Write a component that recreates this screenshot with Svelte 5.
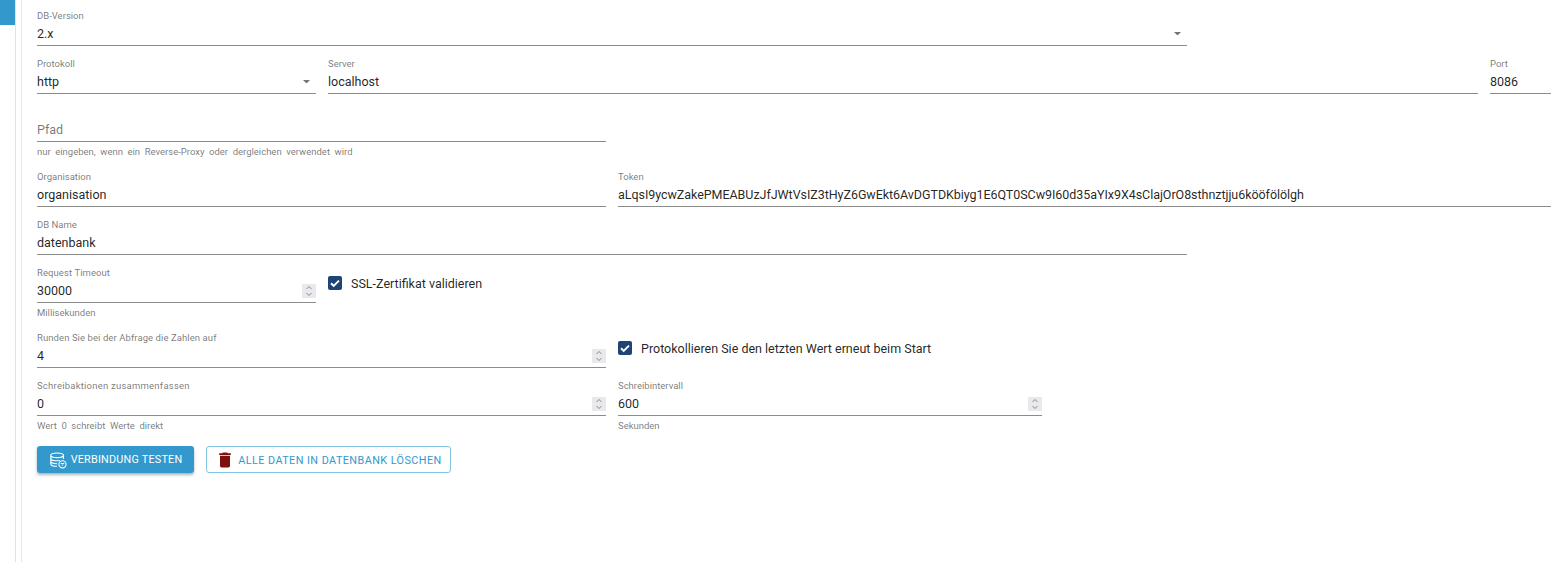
<script>
  const caret = "M0 0h7L3.500 3.500z";
</script>

{#snippet spin()}
  <svg class="spin" viewBox="0 0 14 14" aria-hidden="true"><path d="M4.500 5L7 2.500 9.500 5M4.500 9L7 11.500 9.500 9" /></svg>
{/snippet}

<div class="page">
  <aside class="rail"><div class="tab"></div></aside>
  <main class="form">
    <div class="row">
      <div class="field w4">
        <span class="label">DB-Version</span>
        <div class="control"><span class="value">2.x</span><svg class="arrow" viewBox="0 0 7 3.500"><path d={caret} /></svg></div>
      </div>
    </div>
    <div class="row">
      <div class="field w1">
        <span class="label">Protokoll</span>
        <div class="control"><span class="value">http</span><svg class="arrow" viewBox="0 0 7 3.500"><path d={caret} /></svg></div>
      </div>
      <div class="field grow">
        <span class="label">Server</span>
        <div class="control"><input value="localhost" /></div>
      </div>
      <div class="field port">
        <span class="label">Port</span>
        <div class="control"><input value="8086" /></div>
      </div>
    </div>
    <div class="row">
      <div class="field w2">
        <span class="label"></span>
        <div class="control"><input placeholder="Pfad" /></div>
        <p class="help">nur eingeben, wenn ein Reverse-Proxy oder dergleichen verwendet wird</p>
      </div>
    </div>
    <div class="row">
      <div class="field w2">
        <span class="label">Organisation</span>
        <div class="control"><input value="organisation" /></div>
      </div>
      <div class="field grow">
        <span class="label">Token</span>
        <div class="control"><input class="token" value="aLqsI9ycwZakePMEABUzJfJWtVsIZ3tHyZ6GwEkt6AvDGTDKbiyg1E6QT0SCw9I60d35aYIx9X4sClajOrO8sthnztjju6kööfölölgh" /></div>
      </div>
    </div>
    <div class="row">
      <div class="field w4">
        <span class="label">DB Name</span>
        <div class="control"><input value="datenbank" /></div>
      </div>
    </div>
    <div class="row">
      <div class="field w1">
        <span class="label slight">Request Timeout</span>
        <div class="control"><input type="number" value="30000" />{@render spin()}</div>
        <p class="help">Millisekunden</p>
      </div>
      <label class="check">
        <svg viewBox="0 0 14 14"><rect width="14" height="14" rx="2" /><path d="M3 7.200l2.700 2.700L11 4.600" /></svg>
        <span>SSL-Zertifikat validieren</span>
      </label>
    </div>
    <div class="row">
      <div class="field w2">
        <span class="label slight">Runden Sie bei der Abfrage die Zahlen auf</span>
        <div class="control"><input type="number" value="4" />{@render spin()}</div>
      </div>
      <label class="check">
        <svg viewBox="0 0 14 14"><rect width="14" height="14" rx="2" /><path d="M3 7.200l2.700 2.700L11 4.600" /></svg>
        <span>Protokollieren Sie den letzten Wert erneut beim Start</span>
      </label>
    </div>
    <div class="row">
      <div class="field w2">
        <span class="label wide">Schreibaktionen zusammenfassen</span>
        <div class="control"><input type="number" value="0" />{@render spin()}</div>
        <p class="help">Wert 0 schreibt Werte direkt</p>
      </div>
      <div class="field interval">
        <span class="label">Schreibintervall</span>
        <div class="control"><input type="number" value="600" />{@render spin()}</div>
        <p class="help">Sekunden</p>
      </div>
    </div>
    <div class="actions">
      <button class="btn primary">
        <svg viewBox="0 0 20 20" class="db"><path d="M9 2.200c-4 0-7 1-7 2.600v9.600c0 1.600 3 2.600 7 2.600M9 2.200c4 0 7 1 7 2.600s-3 2.600-7 2.600-7-1-7-2.600M2 8.200c0 1.600 3 2.600 7 2.600 1.200 0 2.300-.1 3.200-.3M2 11.500c0 1.600 3 2.600 7 2.600M16 4.800v4.200" /><circle cx="15" cy="14.800" r="4" /><path d="M13 13.800h4M14.200 15.600h1.600" /></svg>
        Verbindung testen
      </button>
      <button class="btn outline">
        <svg viewBox="0 0 24 24" class="trash"><path d="M6 19c0 1.100.9 2 2 2h8c1.100 0 2-.9 2-2V7H6v12zM19 4h-3.500l-1-1h-5l-1 1H5v2h14V4z" /></svg>
        Alle Daten in Datenbank löschen
      </button>
    </div>
  </main>
</div>

<style>
  :global(body) {
    margin: 0;
    background: #fff;
    font-family: Roboto, "Liberation Sans", sans-serif;
  }
  .page {
    display: flex;
    height: 562px;
    overflow: hidden;
  }
  .rail {
    width: 15px;
    flex: none;
    border-right: 1px solid #e2e2e2;
  }
  .tab {
    height: 25px;
    background: #3399cc;
  }
  .form {
    flex: 1;
    min-width: 0;
    margin-left: 5px;
    border-left: 1px solid #e6e6e6;
    padding: 10px 0 0 15px;
  }
  .row {
    display: flex;
    gap: 12px;
    margin-bottom: 12px;
    align-items: flex-start;
  }
  .field {
    flex: none;
    min-width: 0;
  }
  .w1 { width: 279px; }
  .w2 { width: 569px; }
  .w4 { width: 1150px; }
  .port { width: 61px; }
  .interval { width: 424px; }
  .grow { flex: 1; }
  .label {
    display: block;
    height: 12px;
    font-size: 9.500px;
    line-height: 12px;
    color: rgba(0, 0, 0, 0.54);
  }
  .wide { letter-spacing: 0.230px; }
  .slight { letter-spacing: 0.080px; }
  .control {
    display: flex;
    align-items: center;
    height: 23px;
    border-bottom: 1px solid #8c8c8c;
    font-size: 12.500px;
    color: rgba(0, 0, 0, 0.87);
  }
  .value { flex: 1; }
  .arrow {
    width: 7px;
    height: 3.500px;
    margin-right: 6px;
    fill: #757575;
  }
  input {
    flex: 1;
    width: 100%;
    min-width: 0;
    height: 15px;
    padding: 0;
    border: 0;
    outline: 0;
    background: none;
    font: inherit;
    color: inherit;
    appearance: textfield;
  }
  .token { letter-spacing: -0.050px; }
  input::placeholder { color: rgba(0, 0, 0, 0.54); opacity: 1; }
  input::-webkit-inner-spin-button,
  input::-webkit-outer-spin-button { appearance: none; margin: 0; }
  .spin {
    flex: none;
    width: 14px;
    height: 14px;
    background: #e9e9ed;
  }
  .spin path {
    fill: none;
    stroke: #8a8a8a;
    stroke-width: 1;
  }
  .help {
    margin: 0;
    height: 17px;
    font-size: 9.500px;
    line-height: 20px;
    word-spacing: 2.200px;
    color: rgba(0, 0, 0, 0.54);
  }
  .check {
    display: flex;
    align-items: center;
    gap: 9px;
    height: 14px;
    margin-top: 9px;
    font-size: 12.500px;
    color: rgba(0, 0, 0, 0.87);
  }
  .check svg { width: 14px; height: 14px; flex: none; }
  .check rect { fill: #1d4473; }
  .check path { fill: none; stroke: #fff; stroke-width: 2; }
  .actions {
    display: flex;
    gap: 12px;
    margin-top: 13px;
  }
  .btn {
    display: flex;
    align-items: center;
    height: 27px;
    padding: 0;
    border-radius: 3px;
    font: 400 10.800px Roboto, sans-serif;
    text-transform: uppercase;
    cursor: pointer;
  }
  .primary {
    width: 157px;
    justify-content: center;
    gap: 4px;
    border: 0;
    letter-spacing: 0.220px;
    background: #3399cc;
    color: #fff;
    box-shadow: 0 2px 3px rgba(0, 0, 0, 0.3);
  }
  .outline {
    width: 245px;
    justify-content: center;
    gap: 3px;
    padding-top: 1px;
    border: 1px solid #85c4e3;
    letter-spacing: 0.450px;
    background: #fff;
    color: #3399cc;
  }
  .db {
    width: 18px;
    height: 18px;
    fill: none;
    stroke: #fff;
    stroke-width: 1.200;
  }
  .trash {
    width: 20px;
    height: 20px;
    fill: #7f1010;
  }
</style>
